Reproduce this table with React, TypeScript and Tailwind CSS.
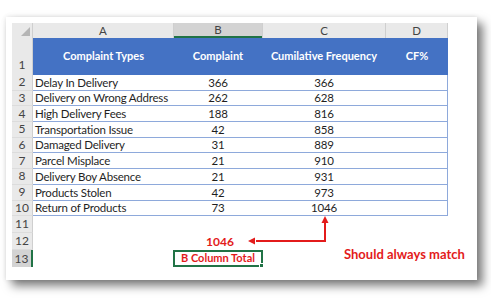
const rows = [
  { n: 2, type: "Delay In Delivery", b: "366", c: "366" },
  { n: 3, type: "Delivery on Wrong Address", b: "262", c: "628" },
  { n: 4, type: "High Delivery Fees", b: "188", c: "816" },
  { n: 5, type: "Transportation Issue", b: "42", c: "858" },
  { n: 6, type: "Damaged Delivery", b: "31", c: "889" },
  { n: 7, type: "Parcel Misplace", b: "21", c: "910" },
  { n: 8, type: "Delivery Boy Absence", b: "21", c: "931" },
  { n: 9, type: "Products Stolen", b: "42", c: "973" },
  { n: 10, type: "Return of Products", b: "73", c: "1046" },
];

const font = { fontFamily: "Lato, 'Open Sans', sans-serif" };

const App = () => {
  return (
    <div className="w-[491px] h-[298px] bg-white pl-[6px] pt-[17px]" style={font}>
      <div className="w-[471px] h-[263px] bg-white p-[6px] shadow-[6px_6px_9px_rgba(0,0,0,0.5),0_0_5px_rgba(0,0,0,0.12)]">
        <div className="relative w-[436px] text-[12px] text-[#1f1f1f]">
          {/* column letters */}
          <div className="flex h-[15px] bg-[#e9e9e9] text-[#444] text-[11.5px]">
            <div className="relative w-[21px] border-r border-[#cfcfcf]">
              <div className="absolute right-[2px] bottom-[2px] w-0 h-0 border-l-[9px] border-l-transparent border-b-[9px] border-b-[#b5b5b5]" />
            </div>
            <div className="w-[141px] flex items-center justify-center border-r border-[#cfcfcf]">A</div>
            <div className="w-[88px] flex items-center justify-center bg-[#d3d3d3] border-b-2 border-[#217346]">B</div>
            <div className="w-[124px] flex items-center justify-center border-l border-r border-[#cfcfcf]">C</div>
            <div className="w-[62px] flex items-center justify-center border-r border-[#cfcfcf]">D</div>
          </div>

          {/* header row */}
          <div className="flex h-[37px]">
            <div className="w-[21px] bg-[#e9e9e9] text-[#444] flex items-end justify-center pb-[1px] border-r border-[#cfcfcf]">1</div>
            <div className="flex flex-1 bg-[#4472c4] text-white font-bold text-[11px] items-center">
              <div className="w-[141px] text-center">Complaint Types</div>
              <div className="w-[88px] text-center">Complaint</div>
              <div className="w-[124px] text-center">Cumilative Frequency</div>
              <div className="w-[62px] text-center">CF%</div>
            </div>
          </div>

          {/* data rows */}
          {rows.map((r) => (
            <div key={r.n} className="flex h-[15.7px]">
              <div className="w-[21px] bg-[#e9e9e9] text-[#444] flex items-center justify-center border-r border-[#cfcfcf] border-b border-b-[#dcdcdc]">
                {r.n}
              </div>
              <div className="flex flex-1 items-center border-b border-r border-[#8ea9db] text-[11.5px] tracking-[-0.2px]">
                <div className="w-[141px] pl-[2px] whitespace-nowrap">{r.type}</div>
                <div className="w-[88px] text-center">{r.b}</div>
                <div className="w-[124px] text-center">{r.c}</div>
                <div className="w-[61px]" />
              </div>
            </div>
          ))}

          {/* rows 11 - 13 */}
          <div className="flex h-[17px]">
            <div className="w-[21px] bg-[#e9e9e9] text-[#444] flex items-center justify-center border-r border-[#cfcfcf] border-b border-b-[#dcdcdc]">11</div>
          </div>
          <div className="flex h-[17px]">
            <div className="w-[21px] bg-[#e9e9e9] text-[#444] flex items-center justify-center border-r border-[#cfcfcf] border-b border-b-[#dcdcdc]">12</div>
            <div className="w-[141px]" />
            <div className="w-[92px] flex items-center justify-center text-[#e31b1b] font-bold">1046</div>
          </div>
          <div className="flex h-[17px]">
            <div className="w-[21px] bg-[#d3d3d3] text-[#444] flex items-center justify-center border-r-2 border-[#217346]">13</div>
            <div className="w-[140px]" />
            <div className="relative w-[90px] flex items-center justify-center text-[#e31b1b] font-bold text-[11px] border-2 border-[#217346]">
              B Column Total
              <div className="absolute -right-[3px] -bottom-[3px] w-[5px] h-[5px] bg-[#217346] border border-white" />
            </div>
          </div>

          {/* annotation */}
          <svg className="absolute left-0 top-0" width="436" height="250" viewBox="0 0 436 250">
            <path d="M313 198 V218 H244" fill="none" stroke="#e31b1b" strokeWidth="2" />
            <path d="M313 193 L309.5 200 L316.5 200 Z" fill="#e31b1b" />
            <path d="M236 218 L243 214.5 L243 221.5 Z" fill="#e31b1b" />
          </svg>
          <div className="absolute left-[332px] top-[222px] text-[13px] font-bold text-[#e31b1b] whitespace-nowrap">
            Should always match
          </div>
        </div>
      </div>
    </div>
  );
};

export default App;
